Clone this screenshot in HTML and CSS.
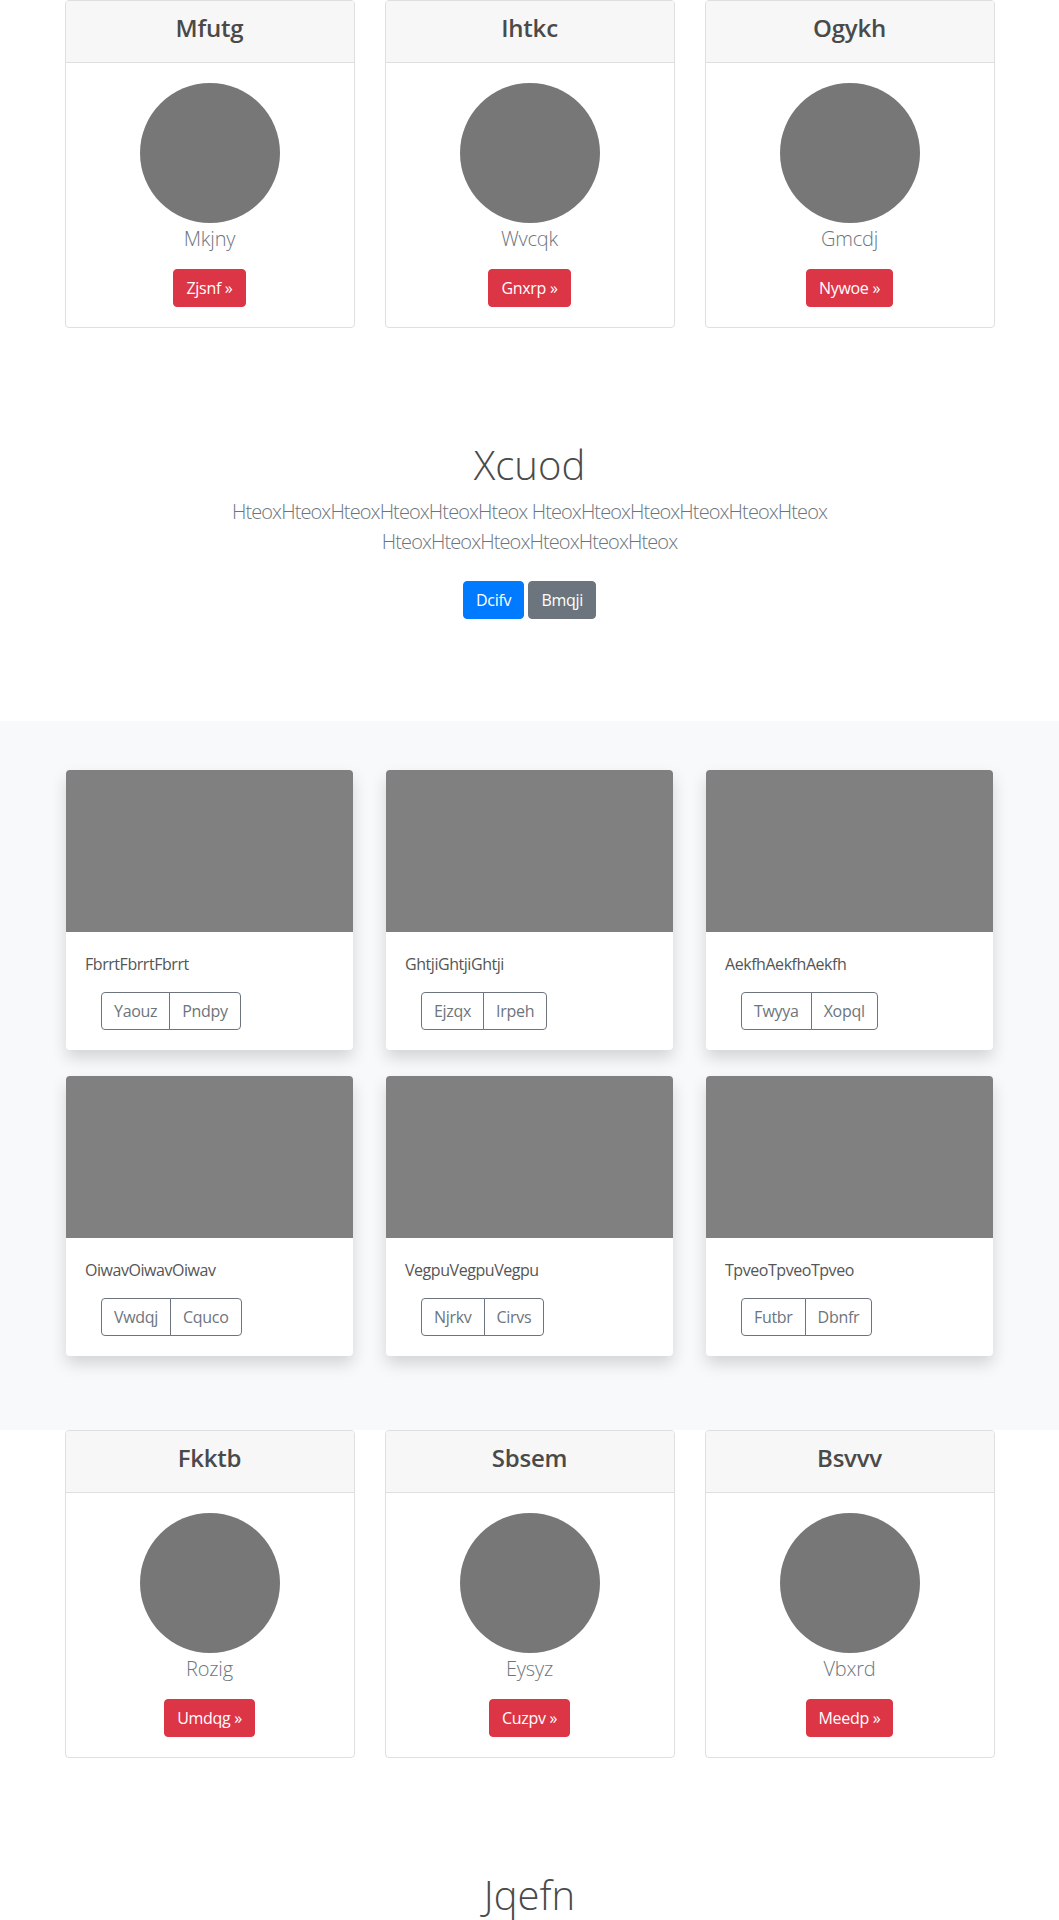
FILE: index.html
```html
<!DOCTYPE html>
<html lang="en">
<head>
<meta charset="utf-8">
<title>Page</title>
<link rel="stylesheet" href="styles.css">
</head>
<body>
<section class="team">
  <div class="container">
    <div class="row3">
      <div class="pcard">
        <div class="pcard-head"><h4 class="pcard-title">Mfutg</h4></div>
        <div class="pcard-body">
          <div class="avatar"></div>
          <p class="pname">Mkjny</p>
          <a class="btn btn-danger">Zjsnf »</a>
        </div>
      </div>
      <div class="pcard">
        <div class="pcard-head"><h4 class="pcard-title">Ihtkc</h4></div>
        <div class="pcard-body">
          <div class="avatar"></div>
          <p class="pname">Wvcqk</p>
          <a class="btn btn-danger">Gnxrp »</a>
        </div>
      </div>
      <div class="pcard">
        <div class="pcard-head"><h4 class="pcard-title">Ogykh</h4></div>
        <div class="pcard-body">
          <div class="avatar"></div>
          <p class="pname">Gmcdj</p>
          <a class="btn btn-danger">Nywoe »</a>
        </div>
      </div>
    </div>
  </div>
</section>

<section class="hero">
  <div class="container">
    <div class="hero-inner">
      <h1 class="hero-title">Xcuod</h1>
      <p class="lead">HteoxHteoxHteoxHteoxHteoxHteox HteoxHteoxHteoxHteoxHteoxHteox HteoxHteoxHteoxHteoxHteoxHteox</p>
      <p class="actions"><a class="btn btn-primary">Dcifv</a> <a class="btn btn-secondary">Bmqji</a></p>
    </div>
  </div>
</section>

<section class="album">
  <div class="container">
    <div class="grid3">
      <div class="fcard">
        <div class="fimg"></div>
        <div class="fbody">
          <p class="ftext">FbrrtFbrrtFbrrt</p>
          <div class="btn-group"><a class="btn btn-outline">Yaouz</a><a class="btn btn-outline">Pndpy</a></div>
        </div>
      </div>
      <div class="fcard">
        <div class="fimg"></div>
        <div class="fbody">
          <p class="ftext">GhtjiGhtjiGhtji</p>
          <div class="btn-group"><a class="btn btn-outline">Ejzqx</a><a class="btn btn-outline">Irpeh</a></div>
        </div>
      </div>
      <div class="fcard">
        <div class="fimg"></div>
        <div class="fbody">
          <p class="ftext">AekfhAekfhAekfh</p>
          <div class="btn-group"><a class="btn btn-outline">Twyya</a><a class="btn btn-outline">Xopql</a></div>
        </div>
      </div>
      <div class="fcard">
        <div class="fimg"></div>
        <div class="fbody">
          <p class="ftext">OiwavOiwavOiwav</p>
          <div class="btn-group"><a class="btn btn-outline">Vwdqj</a><a class="btn btn-outline">Cquco</a></div>
        </div>
      </div>
      <div class="fcard">
        <div class="fimg"></div>
        <div class="fbody">
          <p class="ftext">VegpuVegpuVegpu</p>
          <div class="btn-group"><a class="btn btn-outline">Njrkv</a><a class="btn btn-outline">Cirvs</a></div>
        </div>
      </div>
      <div class="fcard">
        <div class="fimg"></div>
        <div class="fbody">
          <p class="ftext">TpveoTpveoTpveo</p>
          <div class="btn-group"><a class="btn btn-outline">Futbr</a><a class="btn btn-outline">Dbnfr</a></div>
        </div>
      </div>
    </div>
  </div>
</section>

<section class="team">
  <div class="container">
    <div class="row3">
      <div class="pcard">
        <div class="pcard-head"><h4 class="pcard-title">Fkktb</h4></div>
        <div class="pcard-body">
          <div class="avatar"></div>
          <p class="pname">Rozig</p>
          <a class="btn btn-danger">Umdqg »</a>
        </div>
      </div>
      <div class="pcard">
        <div class="pcard-head"><h4 class="pcard-title">Sbsem</h4></div>
        <div class="pcard-body">
          <div class="avatar"></div>
          <p class="pname">Eysyz</p>
          <a class="btn btn-danger">Cuzpv »</a>
        </div>
      </div>
      <div class="pcard">
        <div class="pcard-head"><h4 class="pcard-title">Bsvvv</h4></div>
        <div class="pcard-body">
          <div class="avatar"></div>
          <p class="pname">Vbxrd</p>
          <a class="btn btn-danger">Meedp »</a>
        </div>
      </div>
    </div>
  </div>
</section>

<section class="hero hero-last">
  <div class="container">
    <div class="hero-inner">
      <h1 class="hero-title">Jqefn</h1>
    </div>
  </div>
</section>
</body>
</html>
```

FILE: styles.css
```css
* { box-sizing: border-box; }

html, body {
  margin: 0;
  padding: 0;
}

body {
  font-family: "Open Sans", "Noto Sans", "Liberation Sans", sans-serif;
  font-size: 16px;
  line-height: 1.5;
  color: #212529;
  background: #fff;
}

.container {
  width: 960px;
  margin: 0 auto;
  padding: 0 15px;
}

.row3 {
  display: grid;
  grid-template-columns: repeat(3, 1fr);
  column-gap: 30px;
}

/* profile cards */
.pcard {
  border: 1px solid #dfdfdf;
  border-radius: 4px;
  background: #fff;
  overflow: hidden;
}

.pcard-head {
  background: #f7f7f7;
  border-bottom: 1px solid #dfdfdf;
  padding: 9px 20px 16px;
  text-align: center;
}

.pcard-title {
  margin: 0;
  font-size: 24px;
  line-height: 36px;
  font-weight: 600;
  color: #4a4a4a;
  letter-spacing: -0.2px;
}

.pcard-body {
  padding: 20px;
  display: flex;
  flex-direction: column;
  align-items: center;
}

.avatar {
  width: 140px;
  height: 140px;
  border-radius: 50%;
  background: #777;
}

.pname {
  margin: 1px 0 15px;
  font-size: 20px;
  line-height: 30px;
  font-weight: 300;
  color: #6c757d;
  letter-spacing: -0.2px;
}

/* buttons */
.btn {
  display: inline-block;
  font-size: 16px;
  line-height: 24px;
  padding: 6px 12px;
  border: 1px solid transparent;
  border-radius: 4px;
  text-decoration: none;
  font-weight: 400;
  white-space: nowrap;
  letter-spacing: -0.3px;
}

.btn-danger {
  background: #dc3545;
  border-color: #dc3545;
  color: #fff;
}

.btn-primary {
  background: #007bff;
  border-color: #007bff;
  color: #fff;
  margin: 8px 0;
}

.btn-secondary {
  background: #6c757d;
  border-color: #6c757d;
  color: #fff;
  margin: 8px 0;
}

/* hero */
.hero {
  padding: 113px 0 94px;
  text-align: center;
}

.hero-last {
  padding-bottom: 0;
}

.hero-inner {
  max-width: 700px;
  margin: 0 auto;
}

.hero-title {
  margin: 0 0 8px;
  font-size: 40px;
  line-height: 48px;
  font-weight: 300;
  color: #4a4a4a;
}

.lead {
  margin: 0 0 16px;
  font-size: 20px;
  line-height: 30px;
  font-weight: 300;
  color: #6c757d;
  letter-spacing: -0.9px;
}

.actions {
  margin: 0;
}

/* album */
.album {
  background: #f8f9fa;
  padding: 49px 0 74px;
}

.grid3 {
  display: grid;
  grid-template-columns: repeat(3, 1fr);
  column-gap: 33px;
  row-gap: 26px;
  margin: 0 1.5px;
}

.fcard {
  background: #fff;
  border-radius: 4px;
  box-shadow: 0 8px 16px rgba(0, 0, 0, 0.15);
  overflow: hidden;
}

.fimg {
  height: 162px;
  background: #808080;
}

.fbody {
  padding: 20px 20px 20px 19px;
}

.ftext {
  margin: 0 0 16px;
  font-size: 16px;
  line-height: 24px;
  color: #555;
  letter-spacing: -0.45px;
}

.btn-group {
  display: inline-flex;
  margin-left: 16px;
}

.btn-outline {
  color: #6c757d;
  border-color: #6c757d;
  background: transparent;
}

.btn-group .btn-outline:first-child {
  border-top-right-radius: 0;
  border-bottom-right-radius: 0;
}

.btn-group .btn-outline:last-child {
  border-top-left-radius: 0;
  border-bottom-left-radius: 0;
  margin-left: -1px;
}
```
